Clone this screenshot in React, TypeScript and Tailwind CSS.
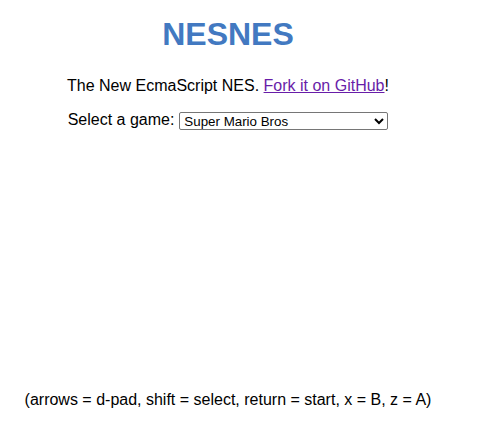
export default function App() {
  return (
    <div className="w-[456px] bg-white text-center text-black" style={{ fontFamily: '"Liberation Sans", Arial, sans-serif' }}>
      <div className="h-[16px]" />
      <h1 className="text-[32px] leading-[37px] font-bold text-[#4279c1]">NESNES</h1>
      <div className="h-[24px]" />
      <p className="text-[16px] leading-[18px]">
        The New EcmaScript NES.{" "}
        <a href="#" className="text-[#681da8] underline">Fork it on GitHub</a>!
      </p>
      <div className="mt-[15px] flex items-center justify-center gap-[5px] text-[16px] leading-[18px]">
        <span>Select a game:</span>
        <select
          defaultValue="smb"
          className="mt-[2px] h-[18px] w-[209px] rounded-[2px] border border-[#767676] bg-white text-[13.33px] text-black"
          style={{ fontFamily: '"Liberation Sans", Arial, sans-serif' }}
        >
          <option value="smb">Super Mario Bros</option>
        </select>
      </div>
      <div className="h-[261px]" />
      <p className="text-[16px] leading-[18px]">(arrows = d-pad, shift = select, return = start, x = B, z = A)</p>
    </div>
  );
}
